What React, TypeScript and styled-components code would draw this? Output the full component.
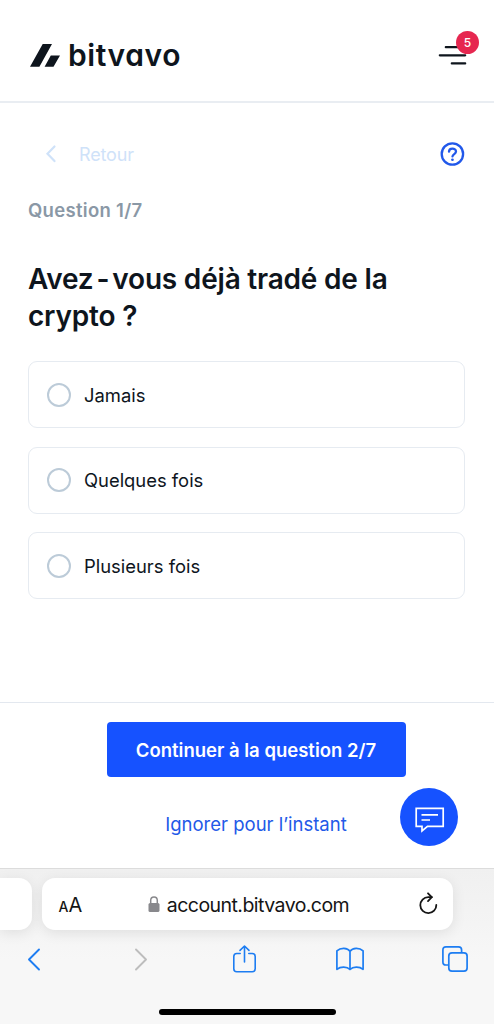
import React, { useState } from "react";
import styled, { createGlobalStyle } from "styled-components";

const Global = createGlobalStyle`
  * { box-sizing: border-box; }
  body { margin: 0; background: #fff; color: #0e151d; font-family: Inter, "Liberation Sans", sans-serif; }
  button { font: inherit; border: 0; padding: 0; background: none; display: block; }
  svg { display: block; overflow: visible; }
`;

const Screen = styled.div`
  width: 494px;
  height: 1024px;
  display: flex;
  flex-direction: column;
  overflow: hidden;
`;

const Header = styled.header`
  height: 103px;
  flex: none;
  border-bottom: 2px solid #e9edf2;
  padding: 31px 14px 0 30px;
  display: flex;
  justify-content: space-between;
  align-items: flex-start;
`;

const Brand = styled.div`
  display: flex;
  padding-top: 13px;
  gap: 7px;
`;

const Wordmark = styled.span`
  font-size: 30px;
  line-height: 36px;
  margin-top: -7px;
  font-weight: 600;
  letter-spacing: 0.6px;
  font-feature-settings: "cv11";
  white-space: nowrap;
`;

const MenuButton = styled.button`
  position: relative;
  width: 41px;
  height: 40px;
`;

const Badge = styled.span`
  position: absolute;
  right: 1px;
  top: 0;
  width: 23px;
  height: 23px;
  border-radius: 50%;
  background: #e62750;
  color: #fff;
  font-size: 12px;
  font-weight: 500;
  line-height: 23px;
  text-align: center;
`;

const Main = styled.main`
  height: 599px;
  flex: none;
  padding: 38px 29px 0 28px;
`;

const TopRow = styled.div`
  display: flex;
  justify-content: space-between;
  align-items: center;
  height: 26px;
  padding-left: 18px;
`;

const BackButton = styled.button`
  display: flex;
  align-items: center;
  gap: 23px;
  color: #cfe2f9;
  font-size: 18px;
  line-height: 26px;
  letter-spacing: -0.15px;
`;

const BackLabel = styled.span`
  padding-top: 1px;
`;

const Progress = styled.p`
  margin: 31px 0 0;
  color: #8a98a6;
  font-size: 18.5px;
  line-height: 24px;
  font-weight: 600;
  letter-spacing: 0.3px;
`;

const Title = styled.h1`
  margin: 39px 0 26px;
  font-size: 28px;
  line-height: 37px;
  font-weight: 600;
  letter-spacing: -0.2px;
  white-space: nowrap;
`;

const Hyphen = styled.span`
  margin: 0 3px;
`;

const Options = styled.div`
  display: flex;
  flex-direction: column;
  gap: 18.5px;
`;

const Option = styled.button`
  && { display: flex; }
  align-items: center;
  gap: 13px;
  height: 67px;
  width: 437px;
  padding-left: 18px;
  border: 1.5px solid #e6ebf1;
  border-radius: 9px;
  font-size: 18.4px;
  color: #0e151d;
`;

const Radio = styled.span<{ $on: boolean }>`
  width: 24px;
  height: 24px;
  border-radius: 50%;
  border: ${(p) => (p.$on ? "7px solid #1652ff" : "2.4px solid #bccbd8")};
`;

const Actions = styled.footer`
  position: relative;
  height: 166px;
  flex: none;
  border-top: 1px solid #e3e8ef;
  padding: 19px 0 0 18px;
  display: flex;
  flex-direction: column;
  align-items: center;
`;

const Continue = styled.button`
  width: 299px;
  height: 55px;
  border-radius: 4px;
  background: #1652ff;
  color: #fff;
  font-size: 18.5px;
  font-weight: 600;
  white-space: nowrap;
`;

const Skip = styled.button`
  margin-top: 34px;
  color: #2259e8;
  font-size: 18.5px;
  line-height: 26px;
  white-space: nowrap;
`;

const Chat = styled.button`
  position: absolute;
  right: 36px;
  top: 85px;
  width: 58px;
  height: 58px;
  border-radius: 50%;
  background: #1652ff;
`;

const Browser = styled.nav`
  flex: 1;
  border-top: 1px solid #dcdcdc;
  background: linear-gradient(#f0f0f0, #f4f4f4 55px, #f7f7f7 90px);
  padding-top: 9px;
  display: flex;
  flex-direction: column;
`;

const Tabs = styled.div`
  display: flex;
  gap: 9.5px;
`;

const NeighbourTab = styled.div`
  width: 32px;
  height: 52px;
  border-radius: 0 13px 13px 0;
  background: #fff;
  box-shadow: 0 3px 14px rgba(0, 0, 0, 0.09);
`;

const AddressBar = styled.div`
  width: 411px;
  height: 52px;
  border-radius: 13px;
  background: #fff;
  box-shadow: 0 3px 14px rgba(0, 0, 0, 0.09);
  display: flex;
  align-items: center;
  justify-content: space-between;
  padding: 0 15px 0 17px;
  color: #151515;
`;

const TextSize = styled.span`
  width: 24px;
  padding-top: 3px;
  font-size: 20px;
  line-height: 24px;
  white-space: nowrap;
  small { font-size: 14px; font-weight: 500; }
`;

const Url = styled.span`
  display: flex;
  align-items: center;
  gap: 7px;
  padding: 1px 5px 0 0;
  font-size: 19.5px;
  letter-spacing: -0.55px;
  line-height: 26px;
`;

const Tools = styled.div`
  display: flex;
  justify-content: space-between;
  align-items: center;
  height: 34px;
  margin-top: 12px;
  padding: 0 25px 0 20px;
`;

const Tool = styled.button`
  && { display: flex; }
  width: 28px;
  justify-content: center;
`;

const HomeBar = styled.div`
  width: 177px;
  height: 6px;
  border-radius: 3px;
  background: #000;
  margin: 33px 0 0 159px;
`;

const answers = ["Jamais", "Quelques fois", "Plusieurs fois"];

export default function App() {
  const [selected, setSelected] = useState<string | null>(null);
  return (
    <Screen>
      <Global />
      <Header>
        <Brand>
          <svg width="31" height="23" fill="#0e151d">
            <path d="M12.7 0H22L9.4 22.7H0zM20.8 11.5H30L23.5 22.7H14.6z" />
          </svg>
          <Wordmark>bitvavo</Wordmark>
        </Brand>
        <MenuButton aria-label="Menu">
          <svg width="41" height="40" stroke="#0e151d" strokeWidth="2.2" strokeLinecap="round">
            <path d="M6.8 16.2H22M.8 24.3H26.2M12.8 32.4H26.2" />
          </svg>
          <Badge>5</Badge>
        </MenuButton>
      </Header>
      <Main>
        <TopRow>
          <BackButton>
            <svg width="10" height="16" fill="none" stroke="currentColor" strokeWidth="2.2" strokeLinecap="round">
              <path d="M8.5 .5L1.5 7.8L8.5 15.1" />
            </svg>
            <BackLabel>Retour</BackLabel>
          </BackButton>
          <svg width="25" height="25" fill="none" stroke="#2158ea" strokeWidth="2.3" strokeLinecap="round" strokeLinejoin="round">
            <circle cx="12.4" cy="12" r="10.7" />
            <path d="M9 9.7C9 5.5 16 5.6 16 9.5C16 12.1 12.9 12 12.5 14.4" />
            <path d="M12.4 17.8H12.5" strokeWidth="2.6" />
          </svg>
        </TopRow>
        <Progress>Question 1/7</Progress>
        <Title>
          Avez<Hyphen>-</Hyphen>vous déjà tradé de la
          <br />
          crypto ?
        </Title>
        <Options>
          {answers.map((a) => (
            <Option key={a} onClick={() => setSelected(a)}>
              <Radio $on={selected === a} />
              {a}
            </Option>
          ))}
        </Options>
      </Main>
      <Actions>
        <Continue>Continuer à la question 2/7</Continue>
        <Skip>Ignorer pour l’instant</Skip>
        <Chat aria-label="Chat">
          <svg width="58" height="58" fill="none" stroke="#fff" strokeWidth="1.7">
            <path d="M16.2 20.4H43.2V38.4H27.5L22 43V38.4H16.2z" />
            <path d="M21.5 26.8H38M21.5 32H30" />
          </svg>
        </Chat>
      </Actions>
      <Browser>
        <Tabs>
          <NeighbourTab />
          <AddressBar>
            <TextSize><small>A</small>A</TextSize>
            <Url>
              <svg width="12" height="16" fill="#88888c">
                <rect x="0.5" y="6" width="11" height="9" rx="1.6" />
                <path d="M2.7 7V3.5C2.7-1.2 9.3-1.2 9.3 3.5V7" fill="none" stroke="#88888c" strokeWidth="1.5" />
              </svg>
              account.bitvavo.com
            </Url>
            <svg width="18" height="22" fill="none" stroke="#151515" strokeWidth="1.8" strokeLinecap="round" strokeLinejoin="round">
              <path d="M11.8 4.2H8.2A8 8 0 1 0 16.3 12" />
              <path d="M8 .3L11.8 4.2L8 8.1" />
            </svg>
          </AddressBar>
        </Tabs>
        <Tools>
          <Tool aria-label="Précédent">
            <svg width="13" height="21" fill="none" stroke="#1d7df2" strokeWidth="1.9" strokeLinecap="round" strokeLinejoin="round">
              <path d="M11 .5L1 10.5L11 20.5" />
            </svg>
          </Tool>
          <Tool aria-label="Suivant">
            <svg width="13" height="21" fill="none" stroke="#bdbdbd" strokeWidth="1.9" strokeLinecap="round" strokeLinejoin="round">
              <path d="M3 .5L13 10.5L3 20.5" />
            </svg>
          </Tool>
          <Tool aria-label="Partager">
            <svg width="23" height="28" fill="none" stroke="#1d7df2" strokeWidth="1.6" strokeLinecap="round" strokeLinejoin="round">
              <path d="M7.2 8.5H3.8Q.8 8.5 .8 11.5V23.8Q.8 26.8 3.8 26.8H19.2Q22.2 26.8 22.2 23.8V11.5Q22.2 8.5 19.2 8.5H15.8M11.5 17V1M7 5.4L11.5 1L16 5.4" />
            </svg>
          </Tool>
          <Tool aria-label="Signets">
            <svg width="28" height="23" fill="none" stroke="#1d7df2" strokeWidth="1.7" strokeLinejoin="round">
              <path d="M14 3.3C11.5-.6 4.5-.6.9 2.9V21.3C4.5 18.3 11 18.3 14 21.5C17 18.3 23.5 18.3 27.1 21.3V2.9C23.5-.6 16.5-.6 14 3.3V21.5" />
            </svg>
          </Tool>
          <Tool aria-label="Onglets">
            <svg width="26" height="26" fill="none" stroke="#1d7df2" strokeWidth="1.7">
              <path d="M6.5 19H4Q.9 19 .9 15.9V4Q.9.9 4 .9H16.5Q19.6.9 19.6 4V6.5" />
              <rect x="6.8" y="6.8" width="18.3" height="18.3" rx="3.2" />
            </svg>
          </Tool>
        </Tools>
        <HomeBar />
      </Browser>
    </Screen>
  );
}
